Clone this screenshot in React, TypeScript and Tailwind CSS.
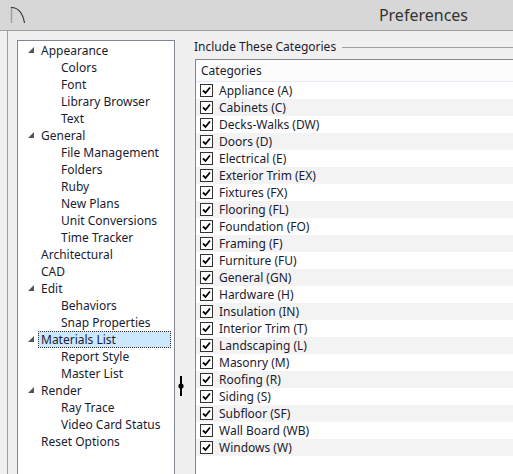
import React from "react";

const tree: [number, string, boolean?][] = [
  [1, "Appearance", true], [2, "Colors"], [2, "Font"], [2, "Library Browser"], [2, "Text"],
  [1, "General", true], [2, "File Management"], [2, "Folders"], [2, "Ruby"], [2, "New Plans"], [2, "Unit Conversions"], [2, "Time Tracker"],
  [1, "Architectural"], [1, "CAD"], [1, "Edit", true], [2, "Behaviors"], [2, "Snap Properties"],
  [1, "Materials List", true], [2, "Report Style"], [2, "Master List"],
  [1, "Render", true], [2, "Ray Trace"], [2, "Video Card Status"], [1, "Reset Options"],
];
const cats = ["Appliance (A)", "Cabinets (C)", "Decks-Walks (DW)", "Doors (D)", "Electrical (E)", "Exterior Trim (EX)", "Fixtures (FX)", "Flooring (FL)", "Foundation (FO)", "Framing (F)", "Furniture (FU)", "General (GN)", "Hardware (H)", "Insulation (IN)", "Interior Trim (T)", "Landscaping (L)", "Masonry (M)", "Roofing (R)", "Siding (S)", "Subfloor (SF)", "Wall Board (WB)", "Windows (W)"];

export default function App() {
  return (
    <div className="w-[513px] h-[474px] overflow-hidden bg-[#f0f0f0] text-[12px] text-[#1b1b30]" style={{ fontFamily: '"Noto Sans", "Open Sans", sans-serif' }}>
      <div className="h-[31px] bg-[#d7d7d7] border-b border-[#a0a0a0] flex items-center relative">
        <svg className="absolute left-[10px] top-[6px]" width="16" height="18" viewBox="0 0 16 18">
          <path d="M1.5 17 V1.5 Q12 2 14.5 17" fill="none" stroke="#333" strokeWidth="1.2" />
          <path d="M1.5 17 V2" stroke="#8bc34a" strokeWidth="1" />
        </svg>
        <div className="ml-auto mr-[45px] text-[16px] text-[#333]" style={{ fontFamily: '"Noto Sans", sans-serif' }}>Preferences</div>
      </div>
      <div className="flex h-[443px] border-l border-[#a0a0a0] ml-[7px]">
        <div className="w-[158px] ml-[9px] mt-[9px] bg-white border border-[#828790] border-b-0 pt-[1px]">
          {tree.map(([lvl, t, exp], i) => (
            <div key={i} className="h-[17px] flex items-center relative">
              {exp && <svg className="absolute left-[10px] top-[5px]" width="6" height="6" viewBox="0 0 6 6"><path d="M6 0 V6 H0 Z" fill="#555" /></svg>}
              <span className={`leading-[15px] ${lvl === 1 ? "ml-[23px]" : "ml-[43px]"} ${t === "Materials List" ? "bg-[#cce8ff] border border-dotted border-[#333] px-[2px] -ml-[0px] w-[134px] -translate-x-[3px]" : ""}`}>{t}</span>
            </div>
          ))}
        </div>
        <div className="w-[19px] relative">
          <svg className="absolute left-[3px] top-[345px]" width="6" height="20" viewBox="0 0 6 20"><path d="M3 0 V20" stroke="#000" strokeWidth="2" /><circle cx="3" cy="10" r="2.6" fill="#000" /></svg>
        </div>
        <div className="flex-1 flex flex-col pt-[8px]">
          <div className="flex items-center h-[16px]">
            <span className="ml-[0px] mr-[6px]">Include These Categories</span>
            <div className="flex-1 border-t border-[#a0a0a0]" />
          </div>
          <div className="mt-[4px] ml-[1px] flex-1 bg-white border-l border-t border-[#828790]">
            <div className="h-[22px] bg-[#fcfcfc] border-b border-[#e3ecf8] flex items-center pl-[5px]">Categories</div>
            {cats.map((c, i) => (
              <div key={c} className={`h-[17px] flex items-center pl-[4px] ${i % 2 ? "bg-[#f3f3f3]" : "bg-white"}`}>
                <span className="w-[13px] h-[13px] border border-[#333] bg-white flex items-center justify-center">
                  <svg width="9" height="9" viewBox="0 0 9 9"><path d="M1 4.5 L3.5 7 L8 1.5" fill="none" stroke="#000" strokeWidth="1.8" /></svg>
                </span>
                <span className="ml-[6px]">{c}</span>
              </div>
            ))}
          </div>
        </div>
      </div>
    </div>
  );
}
